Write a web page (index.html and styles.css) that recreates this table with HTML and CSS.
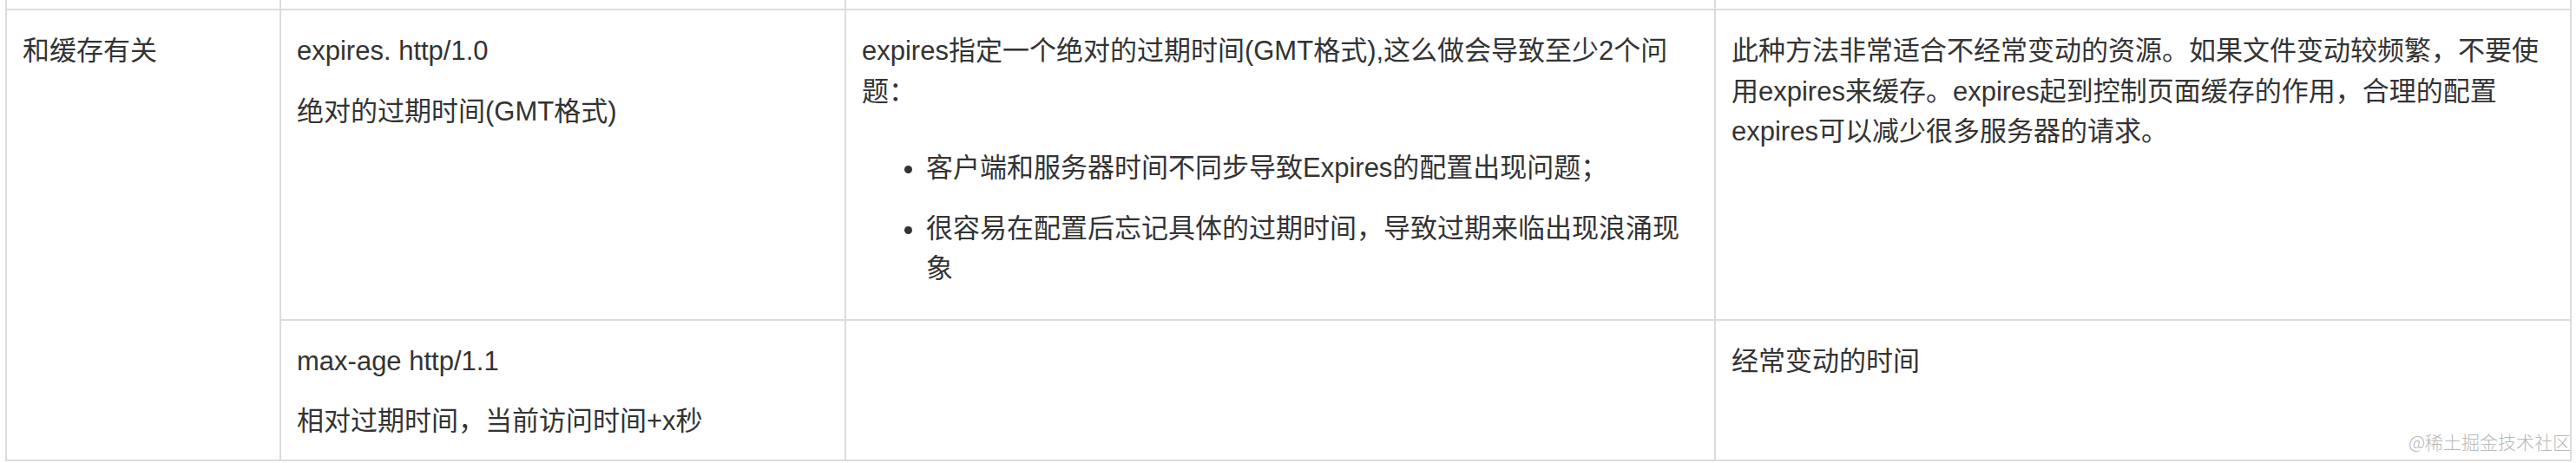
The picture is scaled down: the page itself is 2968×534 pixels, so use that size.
FILE: index.html
```html
<!DOCTYPE html>
<html lang="zh-CN">

<head>
  <meta charset="UTF-8">
  <meta name="viewport" content="width=device-width, initial-scale=1.0">
  <title>HTTP 缓存头</title>
  <link rel="stylesheet" href="styles.css">
</head>

<body class="body-container">
  <div class="table-container">
    <!-- row cut off at the top of the shot -->
    <div class="cell cell-cut"></div>
    <div class="cell cell-cut"></div>
    <div class="cell cell-cut"></div>
    <div class="cell cell-cut"></div>

    <div class="cell cell-group">和缓存有关</div>
    <div class="cell">
      <p>expires. http/1.0</p>
      <p>绝对的过期时间(GMT格式)</p>
    </div>
    <div class="cell">
      <p>expires指定一个绝对的过期时间(GMT格式),这么做会导致至少2个问题：</p>
      <ul class="cell-list">
        <li>客户端和服务器时间不同步导致Expires的配置出现问题；</li>
        <li>很容易在配置后忘记具体的过期时间，导致过期来临出现浪涌现象</li>
      </ul>
    </div>
    <div class="cell">
      <p>此种方法非常适合不经常变动的资源。如果文件变动较频繁，不要使用expires来缓存。expires起到控制页面缓存的作用，合理的配置expires可以减少很多服务器的请求。</p>
    </div>

    <div class="cell">
      <p>max-age http/1.1</p>
      <p>相对过期时间，当前访问时间+x秒</p>
    </div>
    <div class="cell"></div>
    <div class="cell">
      <p>经常变动的时间</p>
    </div>
  </div>

  <div class="watermark">@稀土掘金技术社区</div>
</body>

</html>
```

FILE: styles.css
```css
.body-container {
  font-family: "Liberation Sans", "Noto Sans CJK SC", sans-serif;
  font-size: 31px;
  line-height: 1.5;
  color: #333;
  background-color: #fff;
  margin: 0;
  position: relative;
  height: 534px;
  overflow: hidden;
}

.table-container {
  display: grid;
  grid-template-columns: 316px 651px 1002px 986px;
  width: max-content;
  margin-left: 6px;
  border-left: 2px solid #dcdcdc;
}

.cell {
  box-sizing: border-box;
  padding: 24px 18px 20px;
  border-right: 2px solid #dcdcdc;
  border-bottom: 2px solid #dcdcdc;
}

.cell-cut {
  height: 12px;
  padding: 0;
}

.cell-group {
  grid-row: span 2;
}

.cell p {
  margin: 0;
}

.cell p + p {
  margin-top: 23px;
}

.cell-list {
  margin: 42px 0 14px;
  padding-left: 74px;
}

.cell-list li + li {
  margin-top: 23px;
}

.watermark {
  position: absolute;
  right: 6px;
  bottom: 14px;
  font-family: "Noto Sans CJK SC", sans-serif;
  font-size: 21px;
  font-weight: 300;
  line-height: 1;
  color: #b8b8b8;
}
```
